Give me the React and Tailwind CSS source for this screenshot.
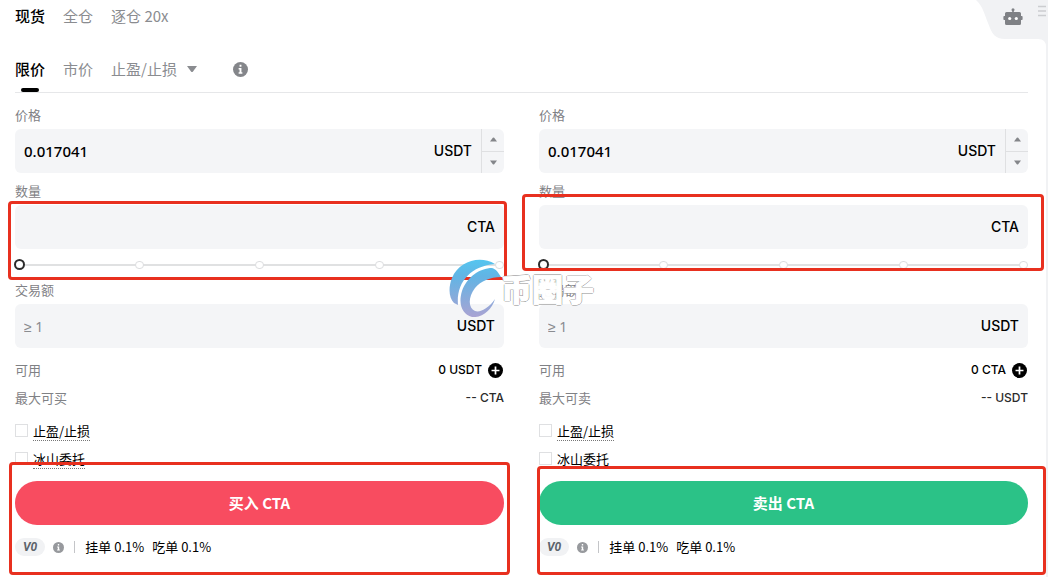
import React, { useState } from "react";

const forms = [
  {
    id: "buy",
    action: "买入 CTA",
    available: "0 USDT",
    maxLabel: "最大可买",
    maxValue: "-- CTA",
    button: "bg-[#f84c60]",
    amountMark: "top-[108px] h-[79px] -left-[7px] -right-[3px]",
    submitMark: "top-[369px] h-[113px] -left-1.5 -right-1.5",
  },
  {
    id: "sell",
    action: "卖出 CTA",
    available: "0 CTA",
    maxLabel: "最大可卖",
    maxValue: "-- USDT",
    button: "bg-[#2bc287]",
    amountMark: "top-[101px] h-[77px] -left-[17px] -right-4",
    submitMark: "top-[373px] h-[109px] -left-0.5 -right-[18px]",
  },
];

const latin = "font-['Inter','Noto_Sans_CJK_SC',sans-serif]";

const InfoIcon = ({ className }) => (
  <svg viewBox="0 0 16 16" className={className}>
    <circle cx="8" cy="8" r="8" fill="currentColor" />
    <path d="M7 3h2v2H7zM6 6.5h3V11h1v1.5H6V11h1V8H6z" fill="#fff" />
  </svg>
);

const Caret = ({ up, className }) => (
  <svg viewBox="0 0 10 6" className={className}>
    <path d={up ? "M0 6L4 .5Q5 -.5 6 .5L10 6z" : "M0 0L4 5.5Q5 6.5 6 5.5L10 0z"} fill="currentColor" />
  </svg>
);

const Robot = () => (
  <svg viewBox="0 0 20 18" className="h-[18px] w-5" fill="#7f8185">
    <circle cx="10" cy="1.8" r="1.5" />
    <path d="M9.2 2h1.6v3H9.2z" />
    <path d="M3.5 4h13q1.5 0 1.5 1.5V8h.8q.8 0 .8.8v2.4q0 .8-.8.8H18v3.5q0 1.5-1.5 1.5h-13Q2 17 2 15.5V12h-.8q-.8 0-.8-.8V8.8q0-.8.8-.8H2V5.5Q2 4 3.5 4z" />
    <circle cx="6.7" cy="10.5" r="1.6" fill="#fff" />
    <circle cx="13.3" cy="10.5" r="1.6" fill="#fff" />
  </svg>
);

const Field = ({ id, label, unit, value, onChange, placeholder, stepper }) => (
  <div>
    <label htmlFor={id} className="mb-1 block h-5 text-[13px] leading-5 text-[#7f8185]">
      {label}
    </label>
    <div className="flex h-11 overflow-hidden rounded-md bg-[#f4f5f7]">
      <input
        id={id}
        type="text"
        value={value}
        onChange={onChange}
        placeholder={placeholder}
        className="min-w-0 flex-1 bg-transparent pl-[9px] font-['Noto_Sans',sans-serif] text-[15px] font-medium text-black outline-none placeholder:text-sm placeholder:font-normal placeholder:text-[#8a8c90]"
      />
      <span className={`flex items-center pr-[9px] text-sm font-medium text-black ${latin}`}>{unit}</span>
      {stepper && (
        <div className="flex w-[23px] flex-col border-l border-[#dfe0e2] text-[#84868a]">
          <button type="button" aria-label="+" className="flex flex-1 items-center justify-center border-b border-[#dfe0e2]">
            <Caret up className="h-[5px] w-[7px]" />
          </button>
          <button type="button" aria-label="-" className="flex flex-1 items-center justify-center">
            <Caret className="h-[5px] w-[7px]" />
          </button>
        </div>
      )}
    </div>
  </div>
);

const AmountSlider = ({ value, onChange }) => (
  <div className="relative flex h-[31px] items-center">
    <div className="absolute inset-x-1 h-0.5 bg-[#e0e1e2]" />
    <div className="absolute inset-x-0 flex justify-between">
      {[0, 25, 50, 75, 100].map((stop) => (
        <span key={stop} className="h-2 w-[9px] rounded-full border border-[#dcdddf] bg-white" />
      ))}
    </div>
    <input
      type="range"
      aria-label="数量"
      min="0"
      max="100"
      value={value}
      onChange={onChange}
      className="relative -mx-px h-3 w-full appearance-none bg-transparent [&::-webkit-slider-thumb]:size-[11px] [&::-webkit-slider-thumb]:appearance-none [&::-webkit-slider-thumb]:rounded-full [&::-webkit-slider-thumb]:border-2 [&::-webkit-slider-thumb]:border-[#2b2b2b] [&::-webkit-slider-thumb]:bg-white"
    />
  </div>
);

const OrderForm = ({ form }) => {
  const [price, setPrice] = useState("0.017041");
  const [amount, setAmount] = useState("");
  const [total, setTotal] = useState("");
  const [percent, setPercent] = useState(0);

  return (
    <form className="relative pt-3" onSubmit={(e) => e.preventDefault()}>
      <Field
        id={`${form.id}-price`}
        label="价格"
        unit="USDT"
        value={price}
        onChange={(e) => setPrice(e.target.value)}
        stepper
      />
      <div className="mt-2">
        <Field id={`${form.id}-amount`} label="数量" unit="CTA" value={amount} onChange={(e) => setAmount(e.target.value)} />
      </div>
      <AmountSlider value={percent} onChange={(e) => setPercent(e.target.value)} />
      <Field
        id={`${form.id}-total`}
        label="交易额"
        unit="USDT"
        value={total}
        onChange={(e) => setTotal(e.target.value)}
        placeholder="≥ 1"
      />

      {/* Balance */}
      <div className="mt-2 text-[13px] text-[#7f8185]">
        <div className="flex h-7 items-center justify-between">
          <span>可用</span>
          <span className={`flex items-center gap-1.5 text-xs font-medium text-black ${latin}`}>
            {form.available}
            <button type="button" aria-label="充值" className="pr-px">
              <svg viewBox="0 0 14 14" className="size-[15px]">
                <circle cx="7" cy="7" r="7" fill="#000" />
                <path d="M7 3.3v7.4M3.3 7h7.4" stroke="#fff" strokeWidth="1.6" />
              </svg>
            </button>
          </span>
        </div>
        <div className="flex h-7 items-center justify-between">
          <span>{form.maxLabel}</span>
          <span className={`text-xs font-medium text-[#2b2b2b] ${latin}`}>{form.maxValue}</span>
        </div>
      </div>

      {/* Options */}
      <div className="mt-[5px] text-[13px] text-black">
        {["止盈/止损", "冰山委托"].map((name) => (
          <label key={name} className="flex h-7 w-fit items-center gap-[5px]">
            <input type="checkbox" className="mb-0.5 size-[13px] appearance-none border border-[#dfe0e2] bg-white checked:bg-black" />
            <span className="border-b border-dotted border-[#777] leading-[18px]">{name}</span>
          </label>
        ))}
      </div>

      <button type="submit" className={`mt-2 h-11 w-full rounded-full text-[15px] font-bold text-white ${form.button}`}>
        {form.action}
      </button>

      {/* Fees */}
      <div className="mt-3 flex h-5 items-center text-[13px] text-black">
        <span className="rounded-full bg-[#f1f2f4] px-2 font-['Roboto',sans-serif] text-xs leading-[18px] font-bold text-[#5c636b] italic">
          V0
        </span>
        <InfoIcon className="ml-2 size-[11px] text-[#97999d]" />
        <span className="mx-2.5 h-3 w-px bg-[#c4c5c8]" />
        <span>挂单 0.1%</span>
        <span className="ml-2">吃单 0.1%</span>
      </div>

      {/* Highlights */}
      <div className={`pointer-events-none absolute rounded-sm border-3 border-[#e8301f] ${form.amountMark}`} />
      <div className={`pointer-events-none absolute rounded-sm border-3 border-[#e8301f] ${form.submitMark}`} />
    </form>
  );
};

const Watermark = () => (
  <div className="pointer-events-none absolute top-[259px] left-1/2 -ml-[75px] flex items-center">
    <svg viewBox="0 0 52 58" className="h-[58px] w-[52px]">
      <defs>
        <linearGradient id="mark" x1="0" y1="0" x2="0" y2="58" gradientUnits="userSpaceOnUse">
          <stop offset="0" stopColor="#55c6f0" />
          <stop offset=".3" stopColor="#62b4e4" />
          <stop offset="1" stopColor="#a9a3d3" />
        </linearGradient>
      </defs>
      <g fill="url(#mark)">
        <path d="M46 5C31-4 10 2 3 19C-1 29 0 39 5 44L9 46C7 24 21 7 46 5z" />
        <path d="M52 18C49 13 47 10 43 9C31 9 18 18 13 32C9 45 13 55 23 58C33 59 43 51 46 40C40 49 31 54 26 52C19 49 19 38 26 29C32 22 41 18 52 18z" />
      </g>
    </svg>
    <span className="text-[31px] leading-8 font-black text-white [-webkit-text-stroke:1px_white] [text-shadow:1px_0_#8c8c8c,-1px_0_#8c8c8c,0_1px_#8c8c8c,0_-1px_#8c8c8c]">
      币圈子
    </span>
  </div>
);

const App = () => {
  const [mode, setMode] = useState("现货");
  const [type, setType] = useState("限价");

  return (
    <div className="relative overflow-hidden bg-[#f1f2f4] pr-0.5 font-['Noto_Sans_CJK_SC',sans-serif] text-[15px]">
      <div className="bg-white pr-[18px] pb-5 pl-[15px]">
        {/* Account mode */}
        <nav className="flex h-8 items-center gap-[18px]">
          {["现货", "全仓", "逐仓 20x"].map((name) => (
            <button
              key={name}
              type="button"
              onClick={() => setMode(name)}
              className={mode === name ? "font-medium text-black" : "text-[#8a8c90]"}
            >
              {name}
            </button>
          ))}
        </nav>

        {/* Order type */}
        <div className="mt-3.5 flex h-[47px] items-center gap-[18px] border-b border-[#e6e7e9]">
          {["限价", "市价", "止盈/止损"].map((name) => (
            <button
              key={name}
              type="button"
              onClick={() => setType(name)}
              className={`relative flex h-full items-center ${type === name ? "font-medium text-black" : "text-[#8a8c90]"}`}
            >
              {name}
              {name === "止盈/止损" && <Caret className="ml-2.5 h-1.5 w-2.5" />}
              {type === name && <span className="absolute inset-x-1.5 bottom-0 h-1 rounded-sm bg-black" />}
            </button>
          ))}
          <InfoIcon className="ml-[18px] size-[15px] text-[#84868a]" />
        </div>

        <div className="grid grid-cols-2 gap-[35px]">
          {forms.map((form) => (
            <OrderForm key={form.id} form={form} />
          ))}
        </div>
      </div>

      {/* Corner tab */}
      <div className="absolute top-0 right-0">
        <svg viewBox="0 0 72 50" className="h-[50px] w-[72px]">
          <path d="M0 0C7 6 9 16 12 23C16 34 19 39 29 39H62Q70 39 70 47V50H72V0z" fill="#f1f2f4" />
        </svg>
        <button type="button" aria-label="机器人" className="absolute top-2 left-[27px]">
          <Robot />
        </button>
        <svg viewBox="0 0 8 12" className="absolute top-[5px] right-0.5 h-3 w-2">
          <path d="M0 1.5h8M0 6h8M0 10.5h8" stroke="#cccdd0" strokeWidth="1.5" />
        </svg>
      </div>

      <Watermark />
    </div>
  );
};

export default App;
